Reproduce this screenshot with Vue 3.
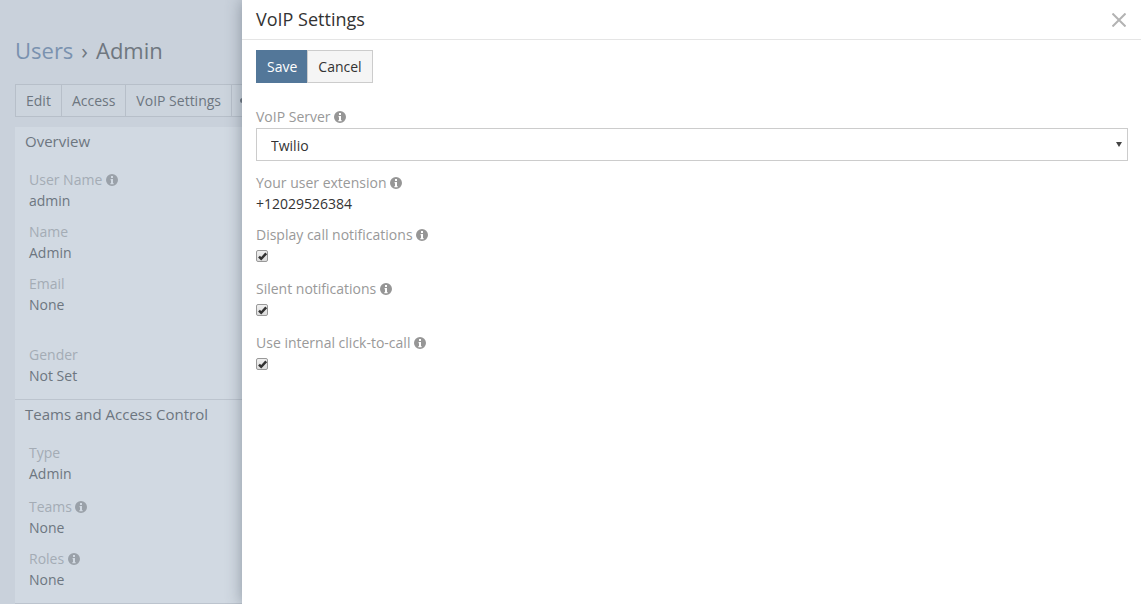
<template>
  <div class="page">
    <h3 class="crumbs"><a class="crumb-link">Users</a><span class="sep">›</span><span>Admin</span></h3>
    <div class="tabs">
      <div class="tab">Edit</div>
      <div class="tab">Access</div>
      <div class="tab">VoIP Settings</div>
      <div class="tab more"><span class="dot"></span></div>
    </div>
    <div class="panel">
      <section v-for="group in groups" :key="group.title" class="group">
        <div class="group-title">{{ group.title }}</div>
        <div class="group-body">
          <div v-for="f in group.fields" :key="f.label" class="field" :class="f.cls">
            <div class="field-label">{{ f.label }}<svg v-if="f.info" class="info" viewBox="0 0 12 12"><path :d="infoPath" fill-rule="evenodd" /></svg></div>
            <div class="field-value">{{ f.value }}</div>
          </div>
        </div>
      </section>
    </div>
  </div>

  <div class="dialog">
    <header class="dialog-head">
      <h4 class="dialog-title">VoIP Settings</h4>
      <svg class="close" viewBox="0 0 14 14"><path d="M0.5 0.5 13.5 13.5M13.5 0.5 0.5 13.5" /></svg>
    </header>
    <div class="dialog-body">
      <div class="actions">
        <button class="btn primary">Save</button>
        <button class="btn">Cancel</button>
      </div>

      <div class="form-row first">
        <div class="field-label dark">VoIP Server<svg class="info" viewBox="0 0 12 12"><path :d="infoPath" fill-rule="evenodd" /></svg></div>
        <div class="select-wrap">
          <select class="select"><option>Twilio</option></select>
          <span class="caret"></span>
        </div>
      </div>
      <div class="form-row ext">
        <div class="field-label dark">Your user extension<svg class="info" viewBox="0 0 12 12"><path :d="infoPath" fill-rule="evenodd" /></svg></div>
        <div class="ext-value">+12029526384</div>
      </div>
      <div v-for="c in checks" :key="c" class="form-row check">
        <div class="field-label dark">{{ c }}<svg class="info" viewBox="0 0 12 12"><path :d="infoPath" fill-rule="evenodd" /></svg></div>
        <span class="box"><svg viewBox="0 0 13 13"><path d="M3 6.6 5.2 8.8 10.2 3.4" /></svg></span>
      </div>
    </div>
  </div>
</template>

<script setup>
const infoPath = 'M6 0a6 6 0 1 0 0 12A6 6 0 0 0 6 0ZM5 2h2v1.9H5ZM4.6 5H7v4h.6v1.2H4.4V9H5V6.2h-.4Z'

const groups = [
  {
    title: 'Overview',
    fields: [
      { label: 'User Name', value: 'admin', info: true },
      { label: 'Name', value: 'Admin' },
      { label: 'Email', value: 'None', cls: 'spaced' },
      { label: 'Gender', value: 'Not Set' }
    ]
  },
  {
    title: 'Teams and Access Control',
    fields: [
      { label: 'Type', value: 'Admin', cls: 'wide' },
      { label: 'Teams', value: 'None', info: true },
      { label: 'Roles', value: 'None', info: true }
    ]
  }
]

const checks = ['Display call notifications', 'Silent notifications', 'Use internal click-to-call']
</script>

<style>
html, body {
  margin: 0;
  height: 100%;
  overflow: hidden;
  background: #c9d1db;
}
</style>

<style scoped>
.page {
  width: 1141px;
  height: 604px;
  box-sizing: border-box;
  padding: 35px 15px 0;
  overflow: hidden;
  font-family: "Open Sans", sans-serif;
  font-size: 14px;
  line-height: 21px;
  color: #6d7680;
  background: #c9d1db;
}
.crumbs {
  margin: 0;
  font-size: 22px;
  font-weight: 400;
  line-height: 30px;
  color: #6f7780;
}
.crumb-link { color: #7a92af; }
.sep { margin: 0 8px; font-size: 22px; }
.tabs {
  display: flex;
  margin-top: 19px;
  height: 33px;
}
.tab {
  box-sizing: border-box;
  padding: 5px 10px;
  border: 1px solid #b7bfc9;
  margin-left: -1px;
  background: #ccd4dd;
}
.tab:first-child { margin-left: 0; }
.more { width: 40px; padding-left: 8px; }
.dot {
  display: block;
  width: 5px;
  height: 5px;
  margin-top: 8px;
  border-radius: 50%;
  background: #6d7680;
}
.panel {
  margin-top: 10px;
  height: 476px;
  background: #d1d9e2;
  border-bottom: 1px solid #bcc4ce;
}
.group + .group { border-top: 1px solid #bcc4ce; }
.group-title {
  padding: 4px 10px 0;
  font-size: 15px;
  line-height: 20px;
  color: #6d7680;
}
.group-body { padding: 18px 14px 13px; }
.field + .field { margin-top: 10px; }
.field.spaced { margin-bottom: 29px; }
.field.wide { margin-bottom: 12px; }
.field-label {
  color: #a4acb5;
  line-height: 21px;
}
.field-label.dark { color: #999; }
.info {
  width: 12px;
  height: 12px;
  margin-left: 3.5px;
  fill: #9aa1a9;
  vertical-align: -1px;
}
.dark .info { fill: #969696; }

.dialog {
  position: absolute;
  top: 0;
  left: 242px;
  width: 899px;
  height: 604px;
  background: #fff;
  box-shadow: 0 0 15px rgba(60, 70, 85, 0.45);
  font-family: "Open Sans", sans-serif;
  font-size: 14px;
  line-height: 21px;
  color: #333;
}
.dialog-head {
  display: flex;
  justify-content: space-between;
  align-items: center;
  height: 39px;
  padding: 0 15px 0 14px;
  border-bottom: 1px solid #e5e5e5;
}
.dialog-title {
  margin: 0;
  font-size: 18px;
  font-weight: 400;
}
.close {
  width: 14px;
  height: 14px;
  fill: none;
  stroke: #b3b3b3;
  stroke-width: 2;
}
.dialog-body { padding: 10px 13px 0 14px; }
.actions { display: flex; }
.btn {
  height: 33px;
  padding: 0 10px;
  margin-left: -1px;
  border: 1px solid #ccc;
  background: #f5f5f5;
  color: #333;
  font: inherit;
}
.btn.primary {
  margin-left: 0;
  border-color: #537799;
  background: #537799;
  color: #fff;
}
.form-row.first { margin-top: 23px; }
.form-row.ext { margin-top: 11px; }
.form-row.check { margin-top: 16px; }
.form-row.ext + .form-row.check { margin-top: 10px; }
.select-wrap { position: relative; margin-top: 1px; }
.select {
  display: block;
  width: 100%;
  height: 33px;
  padding: 2px 14px 0;
  border: 1px solid #ccc;
  border-radius: 0;
  background: #fff;
  color: #333;
  font: inherit;
  appearance: none;
}
.caret {
  position: absolute;
  top: 14px;
  right: 6px;
  border-left: 3px solid transparent;
  border-right: 3px solid transparent;
  border-top: 5px solid #444;
}
.ext-value { color: #333; }
.box {
  display: block;
  box-sizing: border-box;
  width: 12px;
  height: 12px;
  margin-top: 5px;
  border: 1px solid #999;
  border-radius: 2px;
  background: linear-gradient(#f0f0f0, #dcdcdc);
}
.box svg {
  display: block;
  width: 13px;
  height: 13px;
  margin: -1px;
  fill: none;
  stroke: #333;
  stroke-width: 2.5;
}
</style>
